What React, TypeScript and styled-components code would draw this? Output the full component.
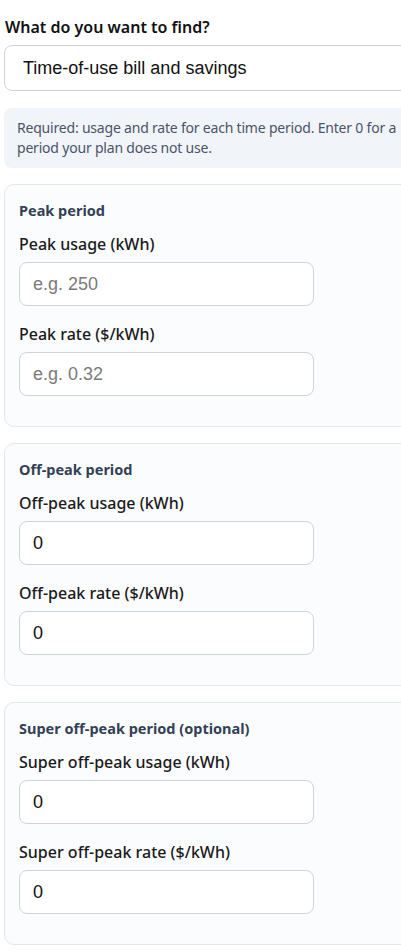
import React, { useState } from 'react';
import styled, { createGlobalStyle } from 'styled-components';

const GlobalStyle = createGlobalStyle`
  html, body {
    margin: 0;
    padding: 0;
    background: #ffffff;
    overflow-x: hidden;
  }
  body {
    font-family: 'Noto Sans', 'Open Sans', sans-serif;
    color: #1a1a1a;
  }
`;

const Page = styled.div`
  width: 440px;
  padding: 15px 0 24px 4px;
`;

const Question = styled.label`
  display: block;
  font-size: 16px;
  font-weight: 600;
  line-height: 24px;
  color: #111;
  margin: 0 0 6px 1px;
`;

const ModeSelect = styled.select`
  display: block;
  width: 100%;
  height: 46px;
  padding: 0 18px;
  border: 1px solid #cfd3da;
  border-radius: 8px;
  background: #fff;
  font-family: 'Liberation Sans', Arial, sans-serif;
  font-size: 18px;
  color: #111;
  appearance: none;
`;

const Note = styled.div`
  margin-top: 17px;
  padding: 10px 12px 10px 13px;
  background: #f1f4f8;
  border-radius: 8px;
  font-size: 14px;
  letter-spacing: -0.2px;
  line-height: 20px;
  color: #4a5568;
`;

const Card = styled.section`
  margin-top: 16px;
  padding: 14px;
  border: 1px solid #e3e7ee;
  border-radius: 10px;
  background: #fbfcfe;
`;

const CardTitle = styled.h3`
  margin: 0 0 11px;
  font-size: 14.5px;
  font-weight: 700;
  line-height: 22px;
  color: #334155;
`;

const Field = styled.div`
  margin-bottom: 16px;
`;

const FieldLabel = styled.label`
  display: block;
  font-size: 16px;
  font-weight: 500;
  line-height: 24px;
  margin-bottom: 6px;
  color: #1a1a1a;
`;

const NumberInput = styled.input`
  display: block;
  box-sizing: border-box;
  width: 295px;
  height: 44px;
  padding: 0 13px;
  border: 1px solid #cfd3da;
  border-radius: 8px;
  background: #fff;
  font-family: 'Liberation Sans', Arial, sans-serif;
  font-size: 18px;
  color: #111;

  &::placeholder {
    color: #7a7a7a;
  }
`;

type Period = {
  key: string;
  title: string;
  name: string;
  usageHint?: string;
  rateHint?: string;
  filled: boolean;
};

const periods: Period[] = [
  { key: 'peak', title: 'Peak period', name: 'Peak', usageHint: 'e.g. 250', rateHint: 'e.g. 0.32', filled: false },
  { key: 'off', title: 'Off-peak period', name: 'Off-peak', filled: true },
  { key: 'super', title: 'Super off-peak period (optional)', name: 'Super off-peak', filled: true },
];

function PeriodCard({ period }: { period: Period }) {
  const [usage, setUsage] = useState(period.filled ? '0' : '');
  const [rate, setRate] = useState(period.filled ? '0' : '');

  return (
    <Card>
      <CardTitle>{period.title}</CardTitle>
      <Field>
        <FieldLabel htmlFor={`${period.key}-usage`}>{period.name} usage (kWh)</FieldLabel>
        <NumberInput
          id={`${period.key}-usage`}
          inputMode="decimal"
          placeholder={period.usageHint}
          value={usage}
          onChange={(e) => setUsage(e.target.value)}
        />
      </Field>
      <Field>
        <FieldLabel htmlFor={`${period.key}-rate`}>{period.name} rate ($/kWh)</FieldLabel>
        <NumberInput
          id={`${period.key}-rate`}
          inputMode="decimal"
          placeholder={period.rateHint}
          value={rate}
          onChange={(e) => setRate(e.target.value)}
        />
      </Field>
    </Card>
  );
}

function App() {
  const [mode, setMode] = useState('tou');

  return (
    <Page>
      <GlobalStyle />
      <Question htmlFor="mode">What do you want to find?</Question>
      <ModeSelect id="mode" value={mode} onChange={(e) => setMode(e.target.value)}>
        <option value="tou">Time-of-use bill and savings</option>
        <option value="flat">Flat-rate bill</option>
      </ModeSelect>
      <Note>
        Required: usage and rate for each time period. Enter 0 for a period your plan does not use.
      </Note>
      {periods.map((p) => (
        <PeriodCard key={p.key} period={p} />
      ))}
    </Page>
  );
}

export default App;
